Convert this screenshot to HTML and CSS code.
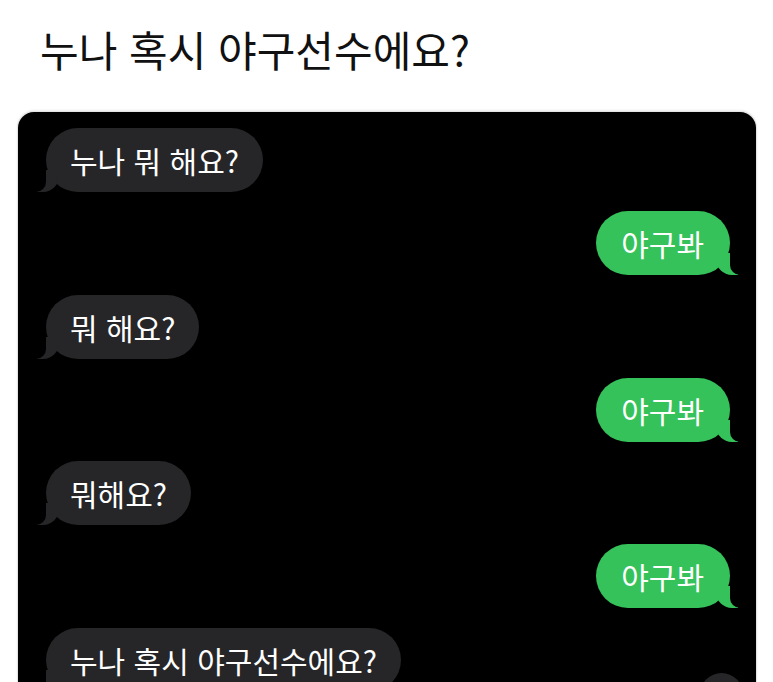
FILE: index.html
```html
<!DOCTYPE html>
<html lang="ko">
<head>
<meta charset="utf-8">
<title>누나 혹시 야구선수에요?</title>
<link rel="stylesheet" href="styles.css">
</head>
<body>

<h1 class="post-title">누나 혹시 야구선수에요?</h1>

<div class="chat">
  <!-- received / sent alternate -->
  <div class="row">
    <div class="bubble received">누나 뭐 해요?</div>
  </div>
  <div class="row sent-row">
    <div class="bubble sent">야구봐</div>
  </div>
  <div class="row">
    <div class="bubble received">뭐 해요?</div>
  </div>
  <div class="row sent-row">
    <div class="bubble sent">야구봐</div>
  </div>
  <div class="row">
    <div class="bubble received">뭐해요?</div>
  </div>
  <div class="row sent-row">
    <div class="bubble sent">야구봐</div>
  </div>
  <div class="row last-row">
    <div class="bubble received">누나 혹시 야구선수에요?</div>
    <div class="next-bubble"></div>
  </div>
</div>

</body>
</html>
```

FILE: styles.css
```css
body {
  margin: 0;
  background: #fff;
  font-family: "Noto Sans CJK KR", "Noto Sans", sans-serif;
  height: 682px;
  overflow: hidden;
}

.post-title {
  margin: 0;
  padding: 20px 0 0 40px;
  height: 90px;
  box-sizing: border-box;
  font-size: 42px;
  font-weight: 400;
  line-height: 58px;
  color: #111;
}

/* the black screenshot frame, cut off at the bottom */
.chat {
  margin-left: 18px;
  width: 738px;
  height: 570px;
  margin-top: 22px;
  box-sizing: border-box;
  background: #000;
  border-radius: 16px 16px 0 0;
  box-shadow: 0 0 0 1px #e4e4e4, 0 -1px 3px rgba(0,0,0,0.15);
  padding: 16px 26px 0 28px;
  display: flex;
  flex-direction: column;
  gap: 19.3px;
  overflow: hidden;
}

.row {
  display: flex;
}

.sent-row {
  justify-content: flex-end;
}

.last-row {
  justify-content: space-between;
  align-items: flex-start;
}

.bubble {
  position: relative;
  height: 64px;
  box-sizing: border-box;
  padding: 0 24px 0 24px;
  border-radius: 32px;
  font-size: 30px;
  line-height: 64px;
  color: #fff;
  white-space: nowrap;
}

.received {
  background: #262628;
}

.sent {
  background: #35c25a;
  padding: 0 26px 0 25px;
}

/* tails */
.bubble::before,
.bubble::after {
  content: "";
  position: absolute;
  bottom: 0;
  height: 22px;
}

.received::before {
  left: -9px;
  width: 22px;
  background: #262628;
  border-bottom-right-radius: 16px;
}

.received::after {
  left: -12px;
  width: 12px;
  background: #000;
  border-bottom-right-radius: 10px;
}

.sent::before {
  right: -8px;
  width: 22px;
  background: #35c25a;
  border-bottom-left-radius: 16px;
}

.sent::after {
  right: -12px;
  width: 12px;
  background: #000;
  border-bottom-left-radius: 10px;
}

.next-bubble {
  margin-top: 45px;
  margin-right: -13px;
  width: 43px;
  height: 43px;
  border-radius: 50%;
  background: #262628;
}
```
